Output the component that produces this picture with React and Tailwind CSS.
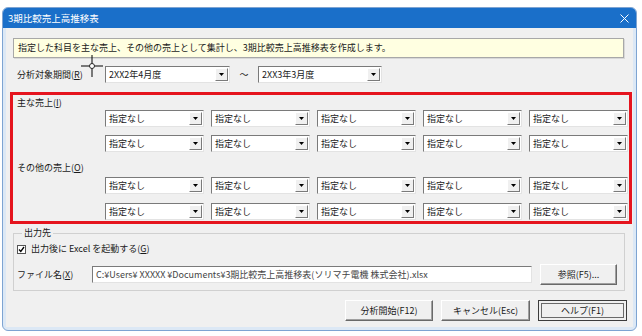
const Arrow = () => (
  <svg width="5" height="3" viewBox="0 0 5 3">
    <path d="M0 0h5L2.5 3z" fill="#000" />
  </svg>
);

const Combo = ({ text, w }) => (
  <div className={`flex h-[17px] items-center border border-b-[#e3e3e3] border-l-[#7a7a7a] border-r-[#e3e3e3] border-t-[#7a7a7a] bg-white ${w}`}>
    <span className="flex-1 whitespace-nowrap pl-[3px] leading-[15px]">{text}</span>
    <span className="mr-[1px] flex h-[13px] w-[13px] items-center justify-center border border-b-[#7a7a7a] border-l-white border-r-[#7a7a7a] border-t-white bg-[#f0f0f0]">
      <Arrow />
    </span>
  </div>
);

const ComboRow = () => (
  <div className="flex gap-[7px] pl-[92px]">
    {[0, 1, 2, 3, 4].map((i) => (
      <Combo key={i} text="指定なし" w="w-[99px]" />
    ))}
  </div>
);

const Btn = ({ children, w }) => (
  <div className={`flex h-[21px] items-center justify-center border border-b-[#696969] border-l-white border-r-[#696969] border-t-white bg-[#f0f0f0] shadow-[inset_-1px_-1px_0_#a0a0a0] ${w}`}>
    {children}
  </div>
);

const App = () => {
  return (
    <div className="relative h-[336px] w-[642px] overflow-hidden bg-white font-['Noto_Sans_CJK_JP','Noto_Sans',sans-serif] text-[9px] text-[#1a1a1a]">
      <div className="ml-[2px] mt-[7px] flex h-[324px] w-[635px] flex-col overflow-hidden rounded-[6px] border border-[#7ea4d2] bg-[#dce8f5]">
        {/* title bar */}
        <div className="flex h-[20px] shrink-0 items-center justify-between bg-[#1a6fc9] pl-[5px] pr-[7px] text-white">
          <span className="text-[9.5px] leading-[14px]">3期比較売上高推移表</span>
          <svg width="9" height="9" viewBox="0 0 9 9">
            <path d="M0.5 0.5l8 8M8.5 0.5l-8 8" stroke="#fff" strokeWidth="1" />
          </svg>
        </div>

        <div className="mx-[3px] mb-[3px] flex flex-1 flex-col bg-[#f0f0f0]">
          {/* info */}
          <div className="ml-[7px] mt-[10px] flex h-[20px] w-[611px] items-center border border-[#a8a8a8] bg-[#ffffe1] pl-[4px] shadow-[1px_1px_0_#d8d8d8]">
            指定した科目を主な売上、その他の売上として集計し、3期比較売上高推移表を作成します。
          </div>

          {/* period */}
          <div className="mt-[8px] flex h-[17px] items-center pl-[11px]">
            <span className="w-[88px]">
              分析対象期間(<span className="underline">R</span>)
            </span>
            <Combo text="2XX2年4月度" w="w-[125px]" />
            <span className="w-[28px] text-center">～</span>
            <Combo text="2XX3年3月度" w="w-[124px]" />
          </div>

          {/* sales (highlighted) */}
          <div className="ml-[4px] mt-[9px] h-[132px] w-[622px] border-[3px] border-[#e5141e]">
            <div className="ml-[4px] mt-[1px] h-[14px] leading-[14px]">
              主な売上(<span className="underline">I</span>)
            </div>
            <ComboRow />
            <div className="mt-[8px]">
              <ComboRow />
            </div>
            <div className="ml-[4px] mt-[9px] h-[14px] leading-[14px]">
              その他の売上(<span className="underline">O</span>)
            </div>
            <div className="mt-[2px]">
              <ComboRow />
            </div>
            <div className="mt-[9px]">
              <ComboRow />
            </div>
          </div>

          {/* output */}
          <fieldset className="ml-[7px] mt-[3px] h-[64px] w-[612px] border border-[#d0d0d0] pl-[3px]">
            <legend className="ml-[5px] px-[2px] leading-[12px]">出力先</legend>
            <div className="mt-[4px] flex h-[12px] items-center">
              <span className="flex h-[9px] w-[9px] items-center justify-center border border-[#555] bg-white">
                <svg width="7" height="7" viewBox="0 0 7 7">
                  <path d="M1 3.5l1.8 2L6 1" stroke="#000" strokeWidth="1.3" fill="none" />
                </svg>
              </span>
              <span className="ml-[5px]">
                出力後に Excel を起動する(<span className="underline">G</span>)
              </span>
            </div>
            <div className="mt-[9px] flex items-center">
              <span className="w-[75px]">
                ファイル名(<span className="underline">X</span>)
              </span>
              <div className="flex h-[17px] w-[440px] items-center whitespace-nowrap border border-b-[#e3e3e3] border-l-[#7a7a7a] border-r-[#e3e3e3] border-t-[#7a7a7a] bg-white pl-[3px] leading-[15px] text-[#444]">
                C:¥Users¥ XXXXX ¥Documents¥3期比較売上高推移表(ソリマチ電機 株式会社).xlsx
              </div>
              <div className="ml-[8px]">
                <Btn w="w-[77px]">参照(F5)...</Btn>
              </div>
            </div>
          </fieldset>

          {/* buttons */}
          <div className="mt-[9px] flex justify-end gap-[8px] pr-[6px]">
            <Btn w="w-[88px]">分析開始(F12)</Btn>
            <Btn w="w-[89px]">キャンセル(Esc)</Btn>
            <div className="flex h-[21px] w-[89px] items-center justify-center border border-[#3c3c3c] bg-[#f0f0f0] p-[2px]">
              <div className="flex h-full w-full items-center justify-center border border-[#6a6a6a]">
                ヘルプ(F1)
              </div>
            </div>
          </div>
        </div>
      </div>

      {/* mouse cursor */}
      <svg className="absolute left-[81px] top-[55px]" width="22" height="22" viewBox="0 0 22 22">
        <path d="M11 0v22M0 11h22" stroke="#000" strokeWidth="1" />
        <circle cx="11" cy="11" r="2.5" fill="#fff" stroke="#000" strokeWidth="0.8" />
      </svg>
    </div>
  );
};

export default App;
